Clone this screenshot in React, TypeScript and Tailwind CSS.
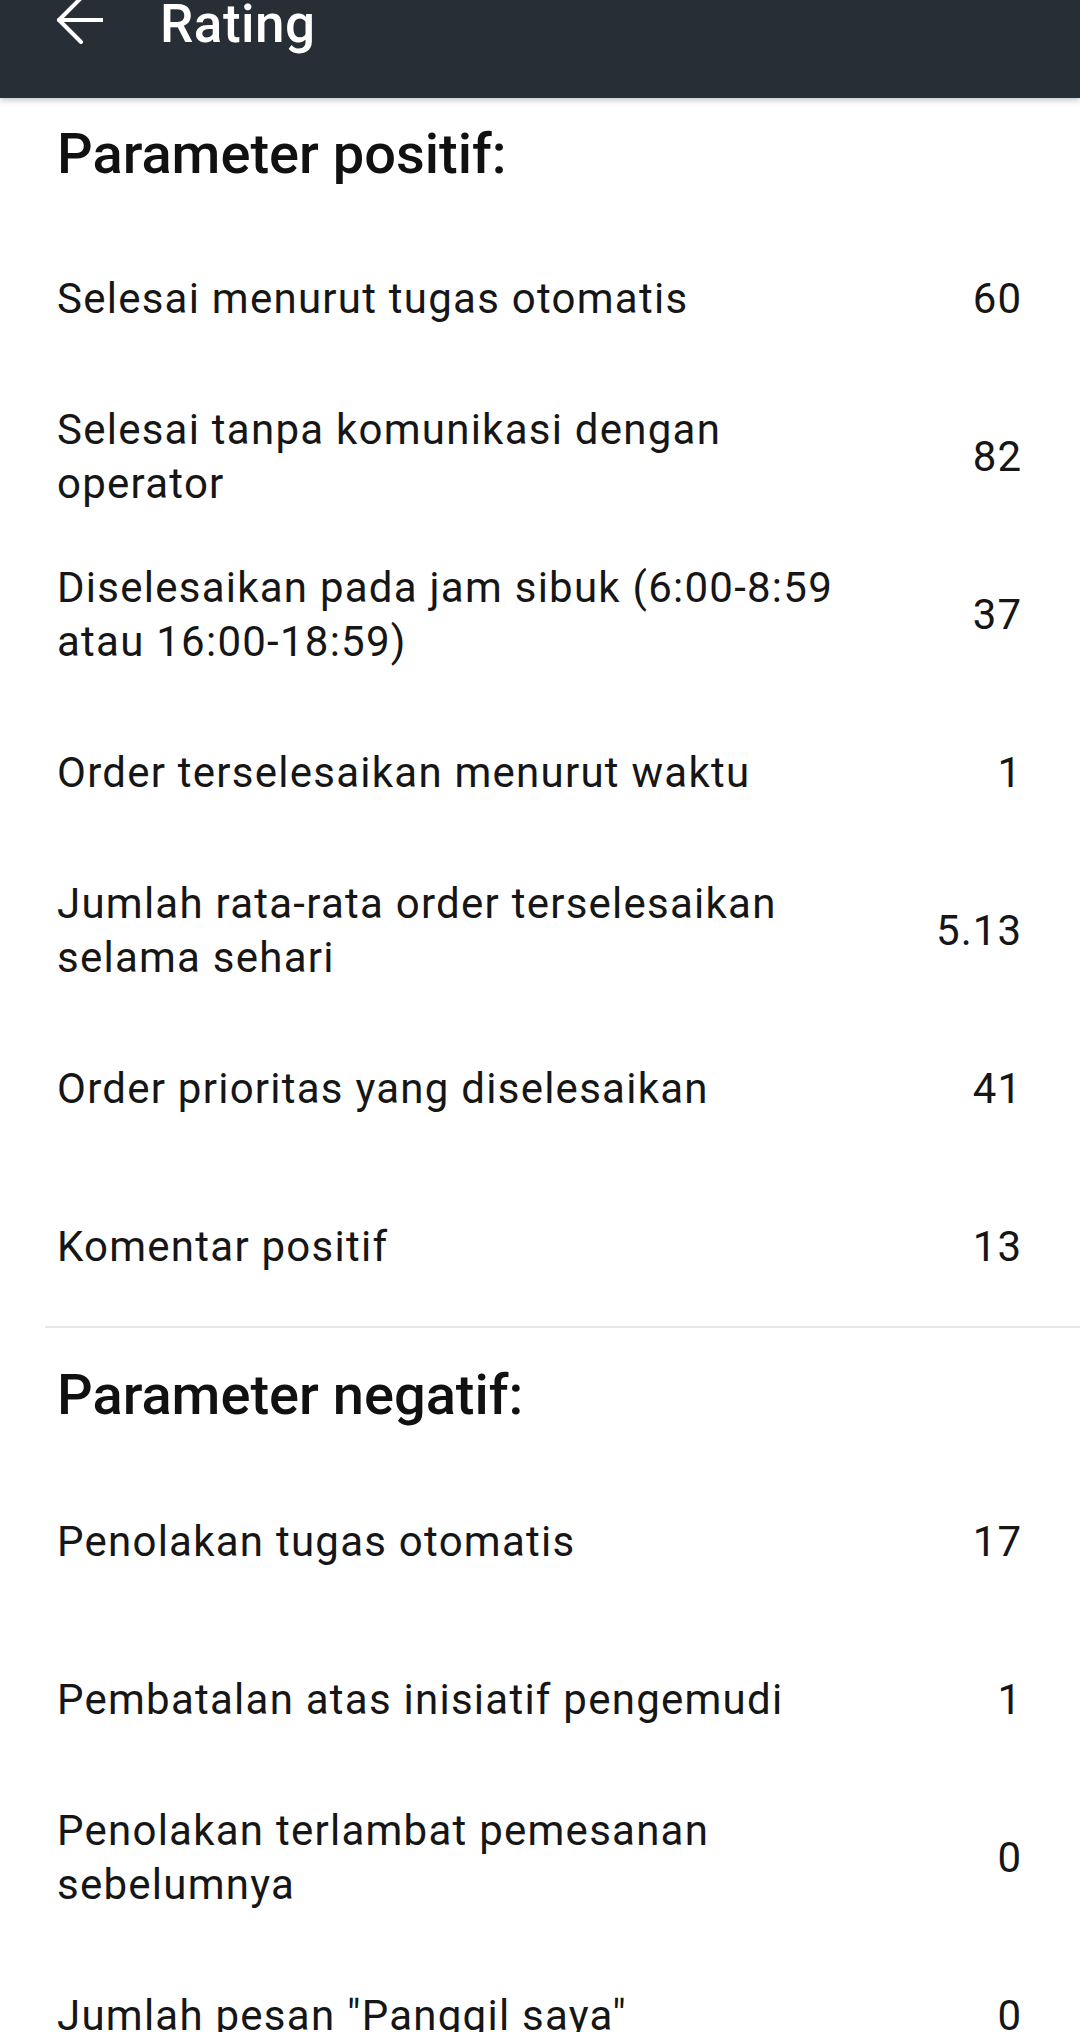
import React from "react"

type Row = { label: string; value: string }

const positive: Row[] = [
    { label: "Selesai menurut tugas otomatis", value: "60" },
    { label: "Selesai tanpa komunikasi dengan operator", value: "82" },
    { label: "Diselesaikan pada jam sibuk (6:00-8:59 atau 16:00-18:59)", value: "37" },
    { label: "Order terselesaikan menurut waktu", value: "1" },
    { label: "Jumlah rata-rata order terselesaikan selama sehari", value: "5.13" },
    { label: "Order prioritas yang diselesaikan", value: "41" },
    { label: "Komentar positif", value: "13" },
]

const negative: Row[] = [
    { label: "Penolakan tugas otomatis", value: "17" },
    { label: "Pembatalan atas inisiatif pengemudi", value: "1" },
    { label: "Penolakan terlambat pemesanan sebelumnya", value: "0" },
    { label: "Jumlah pesan \"Panggil saya\"", value: "0" },
]

function StatRow({ label, value }: Row) {
    return (
        <div className="flex h-[158px] items-center pl-[57px] pr-[58px]">
            <div className="w-[810px] text-[42px] leading-[54px] tracking-[1.25px] text-[#161616]">{label}</div>
            <div className="flex-1 text-right text-[42px] leading-[54px] tracking-[1px] text-[#161616]">{value}</div>
        </div>
    )
}

export default function App() {
    return (
        <div className="h-[2032px] overflow-hidden bg-white" style={{ fontFamily: "Roboto, 'Noto Sans', sans-serif" }}>
            {/* Toolbar */}
            <header className="relative z-10 flex h-[98px] items-start bg-[#272e35] shadow-[0_2px_6px_rgba(0,0,0,0.25)]">
                <svg
                    width="48"
                    height="48"
                    viewBox="0 0 48 48"
                    className="ml-[55px] mt-[-4px] shrink-0"
                    fill="none"
                    stroke="white"
                    strokeWidth="4"
                    strokeLinecap="round"
                    strokeLinejoin="round"
                >
                    <path d="M26 2 4 24l22 22" />
                    <path d="M4 24h44" />
                </svg>
                <h1 className="ml-[57px] mt-[-2px] text-[53px] font-medium leading-[53px] tracking-[0.5px] text-white">Rating</h1>
            </header>

            {/* Positive */}
            <section>
                <h2 className="pl-[57px] pt-[23px] pb-[33px] text-[56px] font-medium leading-[66px] text-[#111]">
                    Parameter positif:
                </h2>
                {positive.map((row) => (
                    <StatRow key={row.label} {...row} />
                ))}
            </section>

            <div className="ml-[45px] h-[2px] bg-[#e6e6e6]" />

            {/* Negative */}
            <section>
                <h2 className="pl-[57px] pt-[34px] pb-[35px] text-[56px] font-medium leading-[66px] text-[#111]">
                    Parameter negatif:
                </h2>
                {negative.map((row) => (
                    <StatRow key={row.label} {...row} />
                ))}
            </section>
        </div>
    )
}
